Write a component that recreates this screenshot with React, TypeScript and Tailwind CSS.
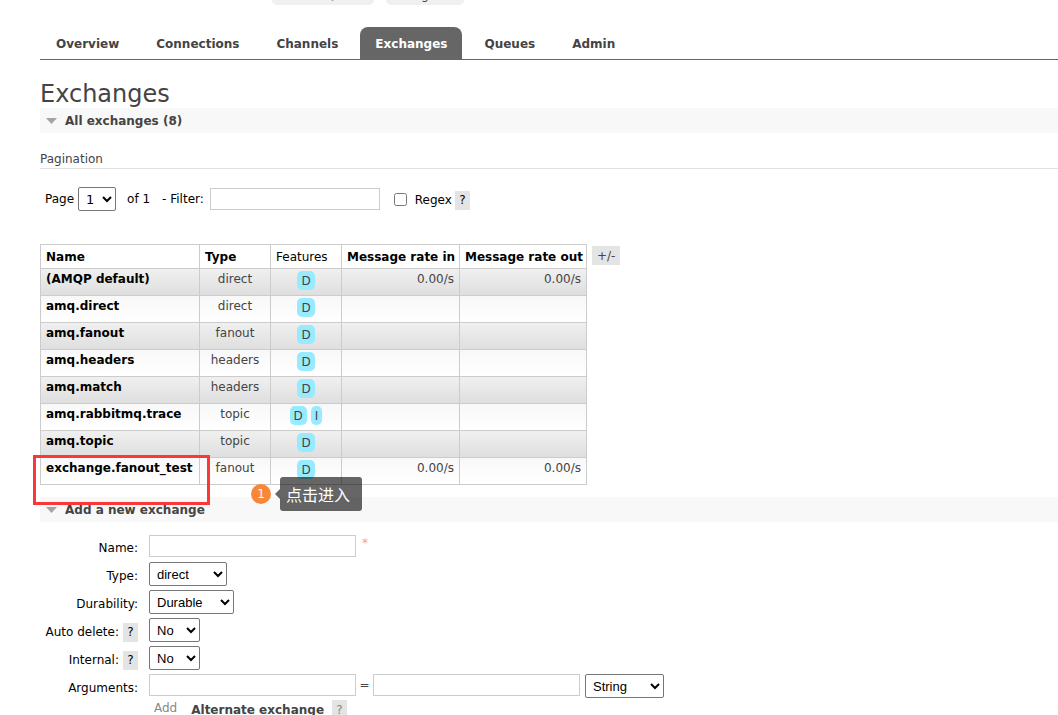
import { type ReactNode } from "react";
import clsx from "clsx";

const versions = ["RabbitMQ 3.8.4", "Erlang 23.0"];

const tabs = ["Overview", "Connections", "Channels", "Exchanges", "Queues", "Admin"];

const exchanges = [
  { name: "(AMQP default)", type: "direct", features: ["D"], rateIn: "0.00/s", rateOut: "0.00/s" },
  { name: "amq.direct", type: "direct", features: ["D"] },
  { name: "amq.fanout", type: "fanout", features: ["D"] },
  { name: "amq.headers", type: "headers", features: ["D"] },
  { name: "amq.match", type: "headers", features: ["D"] },
  { name: "amq.rabbitmq.trace", type: "topic", features: ["D", "I"] },
  { name: "amq.topic", type: "topic", features: ["D"] },
  { name: "exchange.fanout_test", type: "fanout", features: ["D"], rateIn: "0.00/s", rateOut: "0.00/s" },
];

const inputClass = "h-[22px] border border-[#ccc] bg-white px-1 text-black outline-none";
const selectClass =
  "h-6 rounded-[2px] border border-[#767676] bg-white pl-[3px] font-['Liberation_Sans',Arial,sans-serif] text-[13px] text-black";

function Help({ muted }: { muted?: boolean }) {
  return (
    <button
      type="button"
      aria-label="Help"
      className={clsx("h-[19px] w-[15px] bg-[#e4e4e4] text-center", muted ? "text-[#888]" : "text-black")}
    >
      ?
    </button>
  );
}

function Section({ title }: { title: string }) {
  return (
    <h2 className="bg-[#f8f8f8] font-bold">
      <button type="button" className="flex h-[25px] w-full items-center gap-2 pl-1.5 text-left">
        <svg width="11" height="6" viewBox="0 0 11 6" aria-hidden="true">
          <path d="M0 0h11L5.5 6z" fill="#a4a4a4" />
        </svg>
        {title}
      </button>
    </h2>
  );
}

function Field({
  id,
  label,
  help,
  children,
}: {
  id: string;
  label: string;
  help?: boolean;
  children: ReactNode;
}) {
  return (
    <div className="flex h-7 items-start">
      <div className="mr-[11px] flex h-full w-[98px] items-center justify-end gap-1 whitespace-nowrap text-black">
        <label htmlFor={id}>{label}</label>
        {help && <Help />}
      </div>
      {children}
    </div>
  );
}

function Annotations() {
  return (
    <>
      <div className="pointer-events-none absolute -left-[7px] top-[211px] h-[50px] w-[177px] border-3 border-[#fb3737]" />
      <div className="absolute left-[211px] top-[240px] flex size-5 items-center justify-center rounded-full bg-[#fa8737] text-white">
        1
      </div>
      <div className="absolute left-[235px] top-[233px] flex items-center">
        <span className="h-0 w-0 border-y-[5px] border-r-[5px] border-y-transparent border-r-black/60" />
        <span className="flex h-[34px] w-[82px] items-center rounded-[3px] bg-black/60 pl-1.5 font-['Noto_Sans_CJK_SC',sans-serif] text-base text-white">
          点击进入
        </span>
      </div>
    </>
  );
}

function ExchangeTable() {
  return (
    <table className="w-[547px] table-fixed border-collapse border border-[#ccc]">
      <thead>
        <tr className="h-6 text-left whitespace-nowrap text-black *:border *:border-[#ccc] *:px-[5px]">
          <th className="w-[159px]">Name</th>
          <th className="w-[71px]">Type</th>
          <th className="w-[71px] font-normal">Features</th>
          <th className="w-[118px]">Message rate in</th>
          <th className="w-[127px]">Message rate out</th>
        </tr>
      </thead>
      <tbody>
        {exchanges.map((exchange, i) => (
          <tr
            key={exchange.name}
            className={clsx(
              "h-[27px] bg-linear-to-b align-top *:border *:border-[#ccc] *:px-[5px] *:pt-0.5",
              i % 2 === 0 ? "from-[#f0f0f0] to-[#dedede]" : "from-[#f8f8f8] to-white"
            )}
          >
            <td className="font-bold text-black">
              <a href="#exchange">{exchange.name}</a>
            </td>
            <td className="text-center">{exchange.type}</td>
            <td>
              <div className="flex justify-center gap-1">
                {exchange.features.map((feature) => (
                  <span key={feature} className="h-[19px] rounded-[5px] bg-[#98ebff] px-1 leading-5">
                    {feature}
                  </span>
                ))}
              </div>
            </td>
            <td className="text-right">{exchange.rateIn}</td>
            <td className="text-right">{exchange.rateOut}</td>
          </tr>
        ))}
      </tbody>
    </table>
  );
}

export default function App() {
  return (
    <div className="h-screen overflow-hidden bg-white pl-10 font-['DejaVu_Sans',Verdana,sans-serif] text-xs text-[#444]">
      <header className="flex h-[5px] items-end gap-3 overflow-hidden pl-[232px]">
        {versions.map((version, i) => (
          <span
            key={version}
            className={clsx(
              "flex h-5 shrink-0 items-end justify-center whitespace-nowrap rounded-[5px] bg-[#f0f0f0] pb-0.5",
              i === 0 ? "w-[102px]" : "w-[78px]"
            )}
          >
            {version}
          </span>
        ))}
      </header>

      <nav className="mt-[22px] flex gap-[7px] border-b border-[#666] pl-px font-bold">
        {tabs.map((tab) => (
          <a
            key={tab}
            href={`#${tab.toLowerCase()}`}
            className={clsx(
              "flex h-8 items-center rounded-t-lg px-[15px] pt-0.5",
              tab === "Exchanges" && "bg-[#666] text-white"
            )}
          >
            {tab}
          </a>
        ))}
      </nav>

      <main>
        <h1 className="mt-[21px] text-2xl leading-[27px]">Exchanges</h1>
        <Section title="All exchanges (8)" />

        <h3 className="mt-4 border-b border-[#e0e0e0] pt-0.5 leading-[17px]">Pagination</h3>

        <div className="mt-[18px] flex h-6 items-center pl-[5px] text-black">
          <label htmlFor="page">Page</label>
          <select
            id="page"
            className="ml-1 h-6 w-[38px] rounded-[2px] border border-[#767676] bg-white pl-[3px] text-[13px]"
          >
            <option>1</option>
          </select>
          <span className="ml-[11px]">of 1</span>
          <label htmlFor="filter" className="ml-3">
            - Filter:
          </label>
          <input id="filter" className={clsx(inputClass, "ml-1.5 w-[170px]")} />
          <input id="regex" type="checkbox" className="ml-3.5 size-[13px]" />
          <div className="ml-2 flex items-center gap-[3px] pt-0.5">
            <label htmlFor="regex">Regex</label>
            <Help />
          </div>
        </div>

        <div className="relative mt-[33px] flex items-start">
          <ExchangeTable />
          <button type="button" className="ml-[5px] mt-0.5 h-[19px] bg-[#e4e4e4] px-[5px]">
            +/-
          </button>
          <Annotations />
        </div>

        <div className="mt-3">
          <Section title="Add a new exchange" />
        </div>

        <form className="mt-3">
          <Field id="name" label="Name:">
            <input id="name" className={clsx(inputClass, "mt-px w-[207px]")} />
            <span className="ml-1.5 leading-[18px] text-[#f99]">*</span>
          </Field>
          <Field id="type" label="Type:">
            <select id="type" className={clsx(selectClass, "w-[78px]")}>
              <option>direct</option>
            </select>
          </Field>
          <Field id="durability" label="Durability:">
            <select id="durability" className={clsx(selectClass, "w-[85px]")}>
              <option>Durable</option>
            </select>
          </Field>
          <Field id="auto-delete" label="Auto delete:" help>
            <select id="auto-delete" className={clsx(selectClass, "w-[51px]")}>
              <option>No</option>
            </select>
          </Field>
          <Field id="internal" label="Internal:" help>
            <select id="internal" className={clsx(selectClass, "w-[51px]")}>
              <option>No</option>
            </select>
          </Field>
          <div className="flex h-[26px] items-start">
            <label htmlFor="argument-key" className="mr-[11px] w-[98px] pt-1.5 text-right text-black">
              Arguments:
            </label>
            <input id="argument-key" className={clsx(inputClass, "w-[207px]")} />
            <span className="w-[17px] text-center leading-[22px]">=</span>
            <input aria-label="Argument value" className={clsx(inputClass, "w-[207px]")} />
            <select aria-label="Argument type" className={clsx(selectClass, "ml-[5px] w-[79px]")}>
              <option>String</option>
            </select>
          </div>
          <div className="flex items-start pl-[114px] text-[#888]">
            Add
            <button type="button" className="ml-3.5 mr-2 font-bold leading-5 text-[#444]">
              Alternate exchange
            </button>
            <Help muted />
          </div>
        </form>
      </main>
    </div>
  );
}
